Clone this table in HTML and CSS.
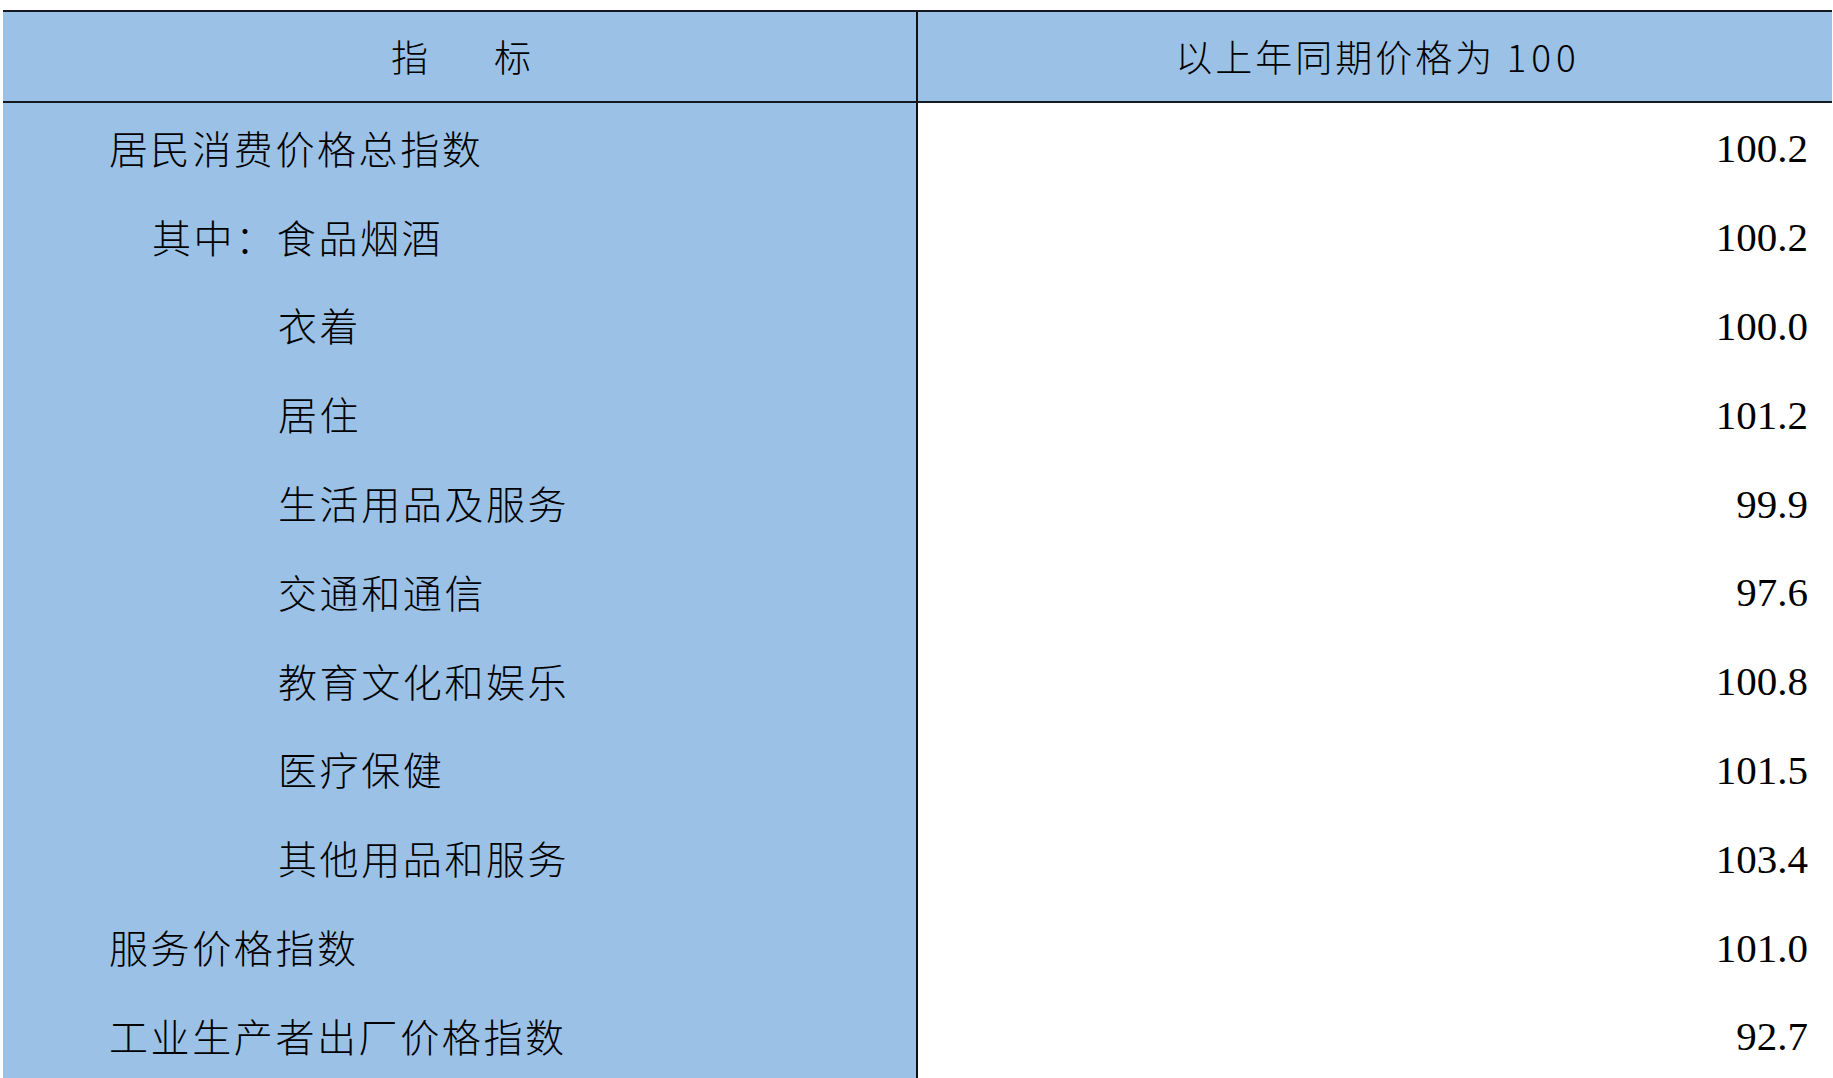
FILE: index.html
```html
<!DOCTYPE html>
<html lang="zh-CN">
<head>
<meta charset="utf-8">
<title>价格指数</title>
<link rel="stylesheet" href="styles.css">
</head>
<body>
<div class="sheet">
  <div class="head">
    <div class="hcell hleft"><span class="gap">指</span>标</div>
    <div class="hcell hright"><span>以上年同期价格为 <span class="hnum">100</span></span></div>
  </div>
  <div class="row"><div class="label l1">居民消费价格总指数</div><div class="value">100.2</div></div>
  <div class="row"><div class="label l2">其中：食品烟酒</div><div class="value">100.2</div></div>
  <div class="row"><div class="label l3">衣着</div><div class="value">100.0</div></div>
  <div class="row"><div class="label l3">居住</div><div class="value">101.2</div></div>
  <div class="row"><div class="label l3">生活用品及服务</div><div class="value">99.9</div></div>
  <div class="row"><div class="label l3">交通和通信</div><div class="value">97.6</div></div>
  <div class="row"><div class="label l3">教育文化和娱乐</div><div class="value">100.8</div></div>
  <div class="row"><div class="label l3">医疗保健</div><div class="value">101.5</div></div>
  <div class="row"><div class="label l3">其他用品和服务</div><div class="value">103.4</div></div>
  <div class="row"><div class="label l1">服务价格指数</div><div class="value">101.0</div></div>
  <div class="row"><div class="label l1">工业生产者出厂价格指数</div><div class="value">92.7</div></div>
</div>
</body>
</html>
```

FILE: styles.css
```css
* { box-sizing: border-box; }
html, body {
  margin: 0;
  padding: 0;
  background: #ffffff;
  overflow: hidden;
  height: 100%;
}
body {
  font-family: "Noto Sans CJK SC", "Noto Sans", sans-serif;
  color: #000;
}
.sheet {
  margin: 10px 0 0 3px;
  width: 1829px;
}
.head {
  display: grid;
  grid-template-columns: 915px 914px;
  height: 93px;
  border-top: 2px solid #141820;
  border-bottom: 2px solid #141820;
  background: #9bc2e6;
}
.hcell {
  display: flex;
  align-items: center;
  justify-content: center;
  font-size: 37px;
  font-weight: 300;
  letter-spacing: 3px;
  line-height: 1;
  white-space: pre;
}
.hleft {
  border-right: 2px solid #111;
  padding-left: 6px;
}
.hright {
  padding-left: 6px;
}
.hnum {
  letter-spacing: 5px;
}
.gap {
  margin-right: 63px;
}
.row {
  display: grid;
  grid-template-columns: 915px 914px;
  height: 88.8px;
}
.label {
  background: #9bc2e6;
  border-right: 2px solid #111;
  display: flex;
  align-items: center;
  font-size: 39px;
  font-weight: 300;
  letter-spacing: 2.6px;
  line-height: 1;
  white-space: nowrap;
}
.l1 { padding-left: 106px; }
.l2 { padding-left: 149px; }
.l3 { padding-left: 275px; }
.value {
  background: #ffffff;
  display: flex;
  align-items: center;
  justify-content: flex-end;
  padding-right: 24px;
  padding-top: 3px;
  font-family: "Liberation Serif", "Times New Roman", serif;
  font-size: 41px;
  line-height: 1;
}
```
